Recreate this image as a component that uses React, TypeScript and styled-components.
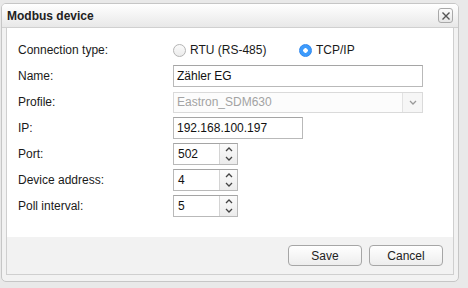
import React from 'react';
import styled, { createGlobalStyle } from 'styled-components';

const GlobalStyle = createGlobalStyle`
  html, body {
    margin: 0;
    padding: 0;
    background: #e9e9e9;
  }
  body {
    font-family: 'Liberation Sans', Arial, sans-serif;
    font-size: 12px;
    color: #1a1a1a;
  }
`;

const fields = [
  { label: 'Name:', kind: 'text', value: 'Zähler EG', width: 250 },
  { label: 'Profile:', kind: 'select', value: 'Eastron_SDM630', width: 250 },
  { label: 'IP:', kind: 'text', value: '192.168.100.197', width: 130 },
  { label: 'Port:', kind: 'number', value: '502', width: 65 },
  { label: 'Device address:', kind: 'number', value: '4', width: 65 },
  { label: 'Poll interval:', kind: 'number', value: '5', width: 65 },
];

const ChevronUp = () => (
  <svg width="8" height="5" viewBox="0 0 8 5">
    <path d="M1 4 L4 1 L7 4" fill="none" stroke="#444" strokeWidth="1.3" />
  </svg>
);

const ChevronDown = ({ color = '#444' }: { color?: string }) => (
  <svg width="8" height="5" viewBox="0 0 8 5">
    <path d="M1 1 L4 4 L7 1" fill="none" stroke={color} strokeWidth="1.3" />
  </svg>
);

const App = () => {
  return (
    <>
      <GlobalStyle />
      <Page>
        <Dialog>
          <TitleBar>
            <Title>Modbus device</Title>
            <CloseButton>
              <svg width="10" height="10" viewBox="0 0 10 10">
                <path d="M1.5 1.5 L8.5 8.5 M8.5 1.5 L1.5 8.5" stroke="#555" strokeWidth="1.4" />
              </svg>
            </CloseButton>
          </TitleBar>
          <Frame>
            <Content>
              <Label>Connection type:</Label>
              <RadioGroup>
                <RadioOption>
                  <Radio />
                  RTU (RS-485)
                </RadioOption>
                <RadioOption>
                  <Radio $checked />
                  TCP/IP
                </RadioOption>
              </RadioGroup>
              {fields.map((f) => (
                <React.Fragment key={f.label}>
                  <Label>{f.label}</Label>
                  <div>
                    {f.kind === 'text' && <TextBox $width={f.width}>{f.value}</TextBox>}
                    {f.kind === 'select' && (
                      <SelectBox $width={f.width}>
                        <SelectValue>{f.value}</SelectValue>
                        <SelectArrow>
                          <ChevronDown color="#999" />
                        </SelectArrow>
                      </SelectBox>
                    )}
                    {f.kind === 'number' && (
                      <SpinBox $width={f.width}>
                        <SpinValue>{f.value}</SpinValue>
                        <SpinButtons>
                          <ChevronUp />
                          <ChevronDown />
                        </SpinButtons>
                      </SpinBox>
                    )}
                  </div>
                </React.Fragment>
              ))}
            </Content>
            <Footer>
              <Button>Save</Button>
              <Button>Cancel</Button>
            </Footer>
          </Frame>
        </Dialog>
      </Page>
    </>
  );
};

export default App;

const Page = styled.div`
  width: 468px;
  height: 288px;
  padding: 3px 0 0 1px;
  box-sizing: border-box;
`;

const Dialog = styled.div`
  width: 458px;
  height: 279px;
  box-sizing: border-box;
  border: 1px solid #c6c6c6;
  border-radius: 5px;
  background: #f2f2f2;
  display: flex;
  flex-direction: column;
  overflow: hidden;
`;

const TitleBar = styled.div`
  height: 23px;
  flex: none;
  display: flex;
  align-items: center;
  justify-content: space-between;
  padding: 0 5px 0 5px;
  background: linear-gradient(#ffffff, #e8e8e8);
  border-bottom: 1px solid #d0d0d0;
`;

const Title = styled.div`
  font-weight: bold;
  font-size: 12px;
  color: #222;
`;

const CloseButton = styled.div`
  width: 13px;
  height: 13px;
  border: 1px solid #a9a9a9;
  border-radius: 3px;
  background: linear-gradient(#fdfdfd, #e6e6e6);
  display: flex;
  align-items: center;
  justify-content: center;
`;

const Frame = styled.div`
  flex: 1;
  margin: 0 4px 6px 4px;
  border: 1px solid #cfcfcf;
  border-top: none;
  display: flex;
  flex-direction: column;
`;

const Content = styled.div`
  background: #fff;
  padding: 11px 0 20px 11px;
  display: grid;
  grid-template-columns: 155px 1fr;
  grid-auto-rows: 22px;
  row-gap: 4px;
  align-items: center;
`;

const Label = styled.div`
  font-size: 12px;
  color: #1a1a1a;
`;

const RadioGroup = styled.div`
  display: flex;
  align-items: center;
`;

const RadioOption = styled.label`
  display: flex;
  align-items: center;
  gap: 4px;
  width: 126px;
  font-size: 12px;
  color: #1a1a1a;
`;

const Radio = styled.span<{ $checked?: boolean }>`
  width: 13px;
  height: 13px;
  border-radius: 50%;
  box-sizing: border-box;
  flex: none;
  border: 1px solid ${(p) => (p.$checked ? '#2f88ee' : '#b4b4b4')};
  background: ${(p) =>
    p.$checked
      ? 'radial-gradient(circle, #fff 0 2px, #3d9bfc 2.5px)'
      : 'linear-gradient(#fafafa, #ececec)'};
`;

const TextBox = styled.div<{ $width: number }>`
  width: ${(p) => p.$width}px;
  height: 22px;
  box-sizing: border-box;
  border: 1px solid #b9b9b9;
  border-top-color: #a5a5a5;
  padding: 0 3px;
  display: flex;
  align-items: center;
  font-size: 12px;
  color: #111;
  background: #fff;
`;

const SelectBox = styled.div<{ $width: number }>`
  width: ${(p) => p.$width}px;
  height: 21px;
  box-sizing: border-box;
  border: 1px solid #dadada;
  display: flex;
  background: #fcfcfc;
`;

const SelectValue = styled.div`
  flex: 1;
  padding: 0 3px;
  display: flex;
  align-items: center;
  color: #a3a3a3;
  font-size: 12px;
`;

const SelectArrow = styled.div`
  width: 19px;
  border-left: 1px solid #e2e2e2;
  display: flex;
  align-items: center;
  justify-content: center;
  background: #f6f6f6;
`;

const SpinBox = styled.div<{ $width: number }>`
  width: ${(p) => p.$width}px;
  height: 22px;
  box-sizing: border-box;
  border: 1px solid #b9b9b9;
  border-top-color: #a5a5a5;
  display: flex;
  background: #fff;
`;

const SpinValue = styled.div`
  flex: 1;
  padding: 0 4px;
  display: flex;
  align-items: center;
  font-size: 12px;
  color: #111;
`;

const SpinButtons = styled.div`
  width: 17px;
  border-left: 1px solid #d4d4d4;
  background: linear-gradient(#fbfbfb, #ececec);
  display: flex;
  flex-direction: column;
  align-items: center;
  justify-content: center;
  gap: 4px;
`;

const Footer = styled.div`
  flex: 1;
  display: flex;
  justify-content: flex-end;
  align-items: flex-start;
  gap: 7px;
  padding: 8px 10px 0 0;
`;

const Button = styled.div`
  width: 74px;
  height: 21px;
  box-sizing: border-box;
  border: 1px solid #a6a6a6;
  border-radius: 4px;
  background: linear-gradient(#ffffff, #ededed);
  display: flex;
  align-items: center;
  justify-content: center;
  font-size: 12px;
  color: #222;
`;
